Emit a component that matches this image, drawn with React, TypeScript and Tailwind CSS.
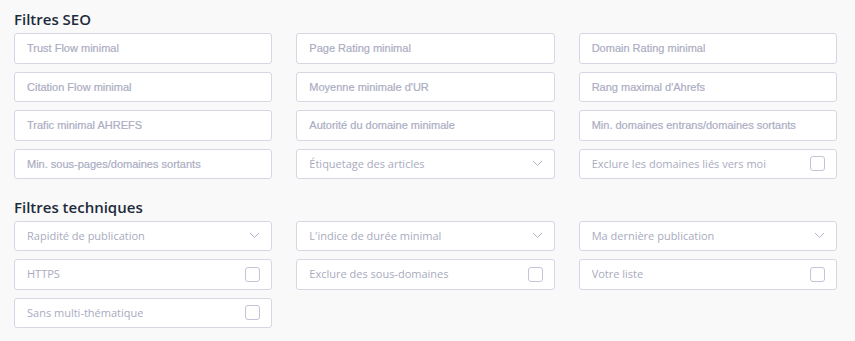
import React from "react";

type Field =
  | { kind: "input"; label: string }
  | { kind: "select"; label: string }
  | { kind: "check"; label: string };

const seo: Field[] = [
  { kind: "input", label: "Trust Flow minimal" },
  { kind: "input", label: "Page Rating minimal" },
  { kind: "input", label: "Domain Rating minimal" },
  { kind: "input", label: "Citation Flow minimal" },
  { kind: "input", label: "Moyenne minimale d'UR" },
  { kind: "input", label: "Rang maximal d'Ahrefs" },
  { kind: "input", label: "Trafic minimal AHREFS" },
  { kind: "input", label: "Autorité du domaine minimale" },
  { kind: "input", label: "Min. domaines entrans/domaines sortants" },
  { kind: "input", label: "Min. sous-pages/domaines sortants" },
  { kind: "select", label: "Étiquetage des articles" },
  { kind: "check", label: "Exclure les domaines liés vers moi" },
];

const tech: Field[] = [
  { kind: "select", label: "Rapidité de publication" },
  { kind: "select", label: "L'indice de durée minimal" },
  { kind: "select", label: "Ma dernière publication" },
  { kind: "check", label: "HTTPS" },
  { kind: "check", label: "Exclure des sous-domaines" },
  { kind: "check", label: "Votre liste" },
  { kind: "check", label: "Sans multi-thématique" },
];

function Chevron() {
  return (
    <svg width="11" height="7" viewBox="0 0 11 7" fill="none" className="shrink-0">
      <path d="M1 1L5.5 5.5L10 1" stroke="#b3b5cf" strokeWidth="1" />
    </svg>
  );
}

function Box({ f }: { f: Field }) {
  if (f.kind === "input") {
    return (
      <div className="h-[30.5px] rounded-[3px] border border-[#d6d7e4] bg-white flex items-center px-[12px]">
        <span className="text-[11px] text-[#abadc2] font-[Liberation_Sans,Arial,sans-serif] [-webkit-text-stroke:0.2px_#abadc2] truncate">
          {f.label}
        </span>
      </div>
    );
  }
  return (
    <div className="h-[30.5px] rounded-[3px] border border-[#d6d7e4] bg-white flex items-center justify-between pl-[12px] pr-[11px]">
      <span className="text-[11px] text-[#a9abc0] font-['Open_Sans',sans-serif] truncate">
        {f.label}
      </span>
      {f.kind === "select" ? (
        <Chevron />
      ) : (
        <span className="w-[15px] h-[15px] rounded-[3px] border border-[#c3c5d6] bg-white shrink-0" />
      )}
    </div>
  );
}

function Section({ title, fields }: { title: string; fields: Field[] }) {
  return (
    <section>
      <h2 className="text-[15px] leading-[20px] font-semibold text-[#1e2b3b] font-['Open_Sans',sans-serif] mb-[4px]">
        {title}
      </h2>
      <div className="grid grid-cols-3 gap-x-[24px] gap-y-[8px]">
        {fields.map((f, i) => (
          <Box key={i} f={f} />
        ))}
      </div>
    </section>
  );
}

export default function App() {
  return (
    <div className="w-[855px] h-[341px] bg-[#f9f9f9] pl-[14px] pr-[18px] pt-[9px] flex flex-col gap-[17.5px] overflow-hidden">
      <Section title="Filtres SEO" fields={seo} />
      <Section title="Filtres techniques" fields={tech} />
    </div>
  );
}
